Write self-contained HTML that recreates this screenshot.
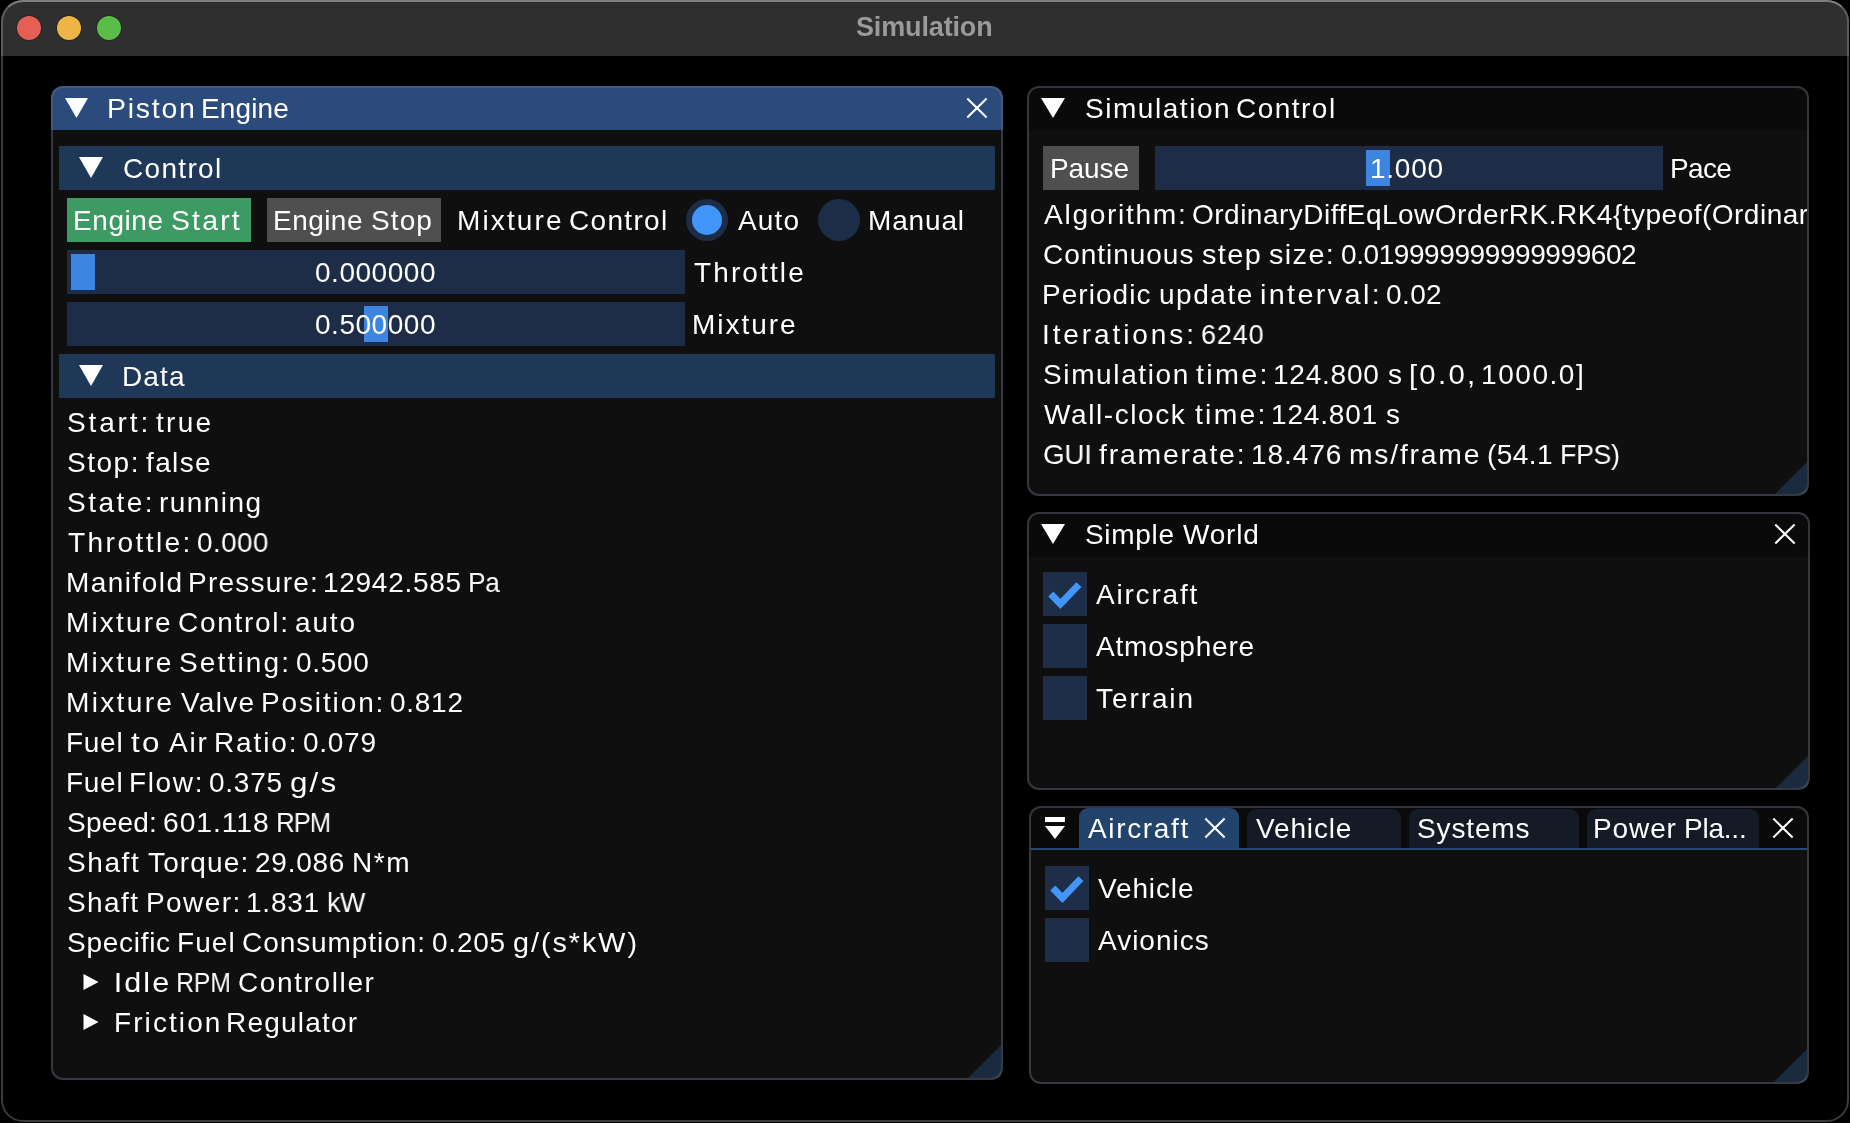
<!DOCTYPE html>
<html><head><meta charset="utf-8">
<style>
html,body{margin:0;padding:0;}
body{width:1850px;height:1123px;background:#000;position:relative;overflow:hidden;font-family:"Liberation Sans",sans-serif;}
.a{position:absolute;box-sizing:border-box;}
.t{position:absolute;white-space:pre;line-height:normal;font-family:"Liberation Sans",sans-serif;will-change:transform;}
.panel{position:absolute;box-sizing:border-box;border-radius:12px;background:#0f0f0f;overflow:hidden;}
.pbd{position:absolute;box-sizing:border-box;border:2px solid rgba(110,110,128,0.43);border-radius:12px;}
svg{position:absolute;left:0;top:0;}
</style></head><body>
<!-- mac window -->
<div class="a" style="left:1px;top:0;width:1848px;height:1122px;border:2px solid #3b3b3b;border-radius:22px;background:#000;"></div>
<div class="a" style="left:1px;top:0;width:1848px;height:56px;background:#2f2f2f;border-top:2px solid #7f7f7f;border-left:2px solid #5c5c5c;border-right:2px solid #5c5c5c;border-radius:22px 22px 0 0;"></div>
<div class="a" style="left:17px;top:16px;width:24px;height:24px;border-radius:50%;background:#e65f54;box-shadow:0 0 0 0.8px rgba(0,0,0,0.3);"></div>
<div class="a" style="left:57px;top:16px;width:24px;height:24px;border-radius:50%;background:#ecb545;box-shadow:0 0 0 0.8px rgba(0,0,0,0.3);"></div>
<div class="a" style="left:97px;top:16px;width:24px;height:24px;border-radius:50%;background:#5bbd49;box-shadow:0 0 0 0.8px rgba(0,0,0,0.3);"></div>

<!-- Piston Engine panel -->
<div class="panel" style="left:51px;top:86px;width:952px;height:994px;">
  <div class="a" style="left:0;top:0;width:952px;height:44px;background:#2a4b7c;"></div>
  <svg width="952" height="994"><path d="M917,992 L950,992 L950,959 Z" fill="#1a2a3f"/></svg>
</div>
<!-- Control header -->
<div class="a" style="left:59px;top:146px;width:936px;height:44px;background:#1f3858;"></div>
<div class="a" style="left:67px;top:198px;width:184px;height:44px;background:#3d9a63;"></div>
<div class="a" style="left:267px;top:198px;width:174px;height:44px;background:#4f4f4f;"></div>
<div class="a" style="left:686px;top:199px;width:42px;height:42px;border-radius:50%;background:#1e2d47;"></div>
<div class="a" style="left:692px;top:205px;width:30px;height:30px;border-radius:50%;background:#4296fa;"></div>
<div class="a" style="left:818px;top:199px;width:42px;height:42px;border-radius:50%;background:#1e2d47;"></div>
<div class="a" style="left:67px;top:250px;width:618px;height:44px;background:#1d2d47;"></div>
<div class="a" style="left:71px;top:254px;width:24px;height:36px;background:#3d85e0;"></div>
<div class="a" style="left:67px;top:302px;width:618px;height:44px;background:#1d2d47;"></div>
<div class="a" style="left:364px;top:306px;width:24px;height:36px;background:#3d85e0;"></div>
<div class="a" style="left:59px;top:354px;width:936px;height:44px;background:#1f3858;"></div>

<!-- Simulation Control panel -->
<div class="panel" style="left:1027px;top:86px;width:782px;height:410px;">
  <div class="a" style="left:0;top:0;width:782px;height:44px;background:#0a0a0a;"></div>
  <svg width="782" height="410"><path d="M748,408 L780,408 L780,376 Z" fill="#1a2a3f"/></svg>
</div>
<div class="a" style="left:1043px;top:146px;width:96px;height:44px;background:#4f4f4f;"></div>
<div class="a" style="left:1155px;top:146px;width:508px;height:44px;background:#1d2d47;"></div>
<div class="a" style="left:1366px;top:150px;width:24px;height:36px;background:#3d85e0;"></div>

<!-- Simple World panel -->
<div class="panel" style="left:1027px;top:512px;width:783px;height:278px;">
  <div class="a" style="left:0;top:0;width:783px;height:45px;background:#0a0a0a;"></div>
  <svg width="783" height="278"><path d="M749,276 L781,276 L781,244 Z" fill="#1a2a3f"/></svg>
</div>
<div class="a" style="left:1043px;top:572px;width:44px;height:44px;background:#1e2e48;"></div>
<div class="a" style="left:1043px;top:624px;width:44px;height:44px;background:#1e2e48;"></div>
<div class="a" style="left:1043px;top:676px;width:44px;height:44px;background:#1e2e48;"></div>

<!-- Tab panel -->
<div class="panel" style="left:1029px;top:806px;width:780px;height:278px;">
  <div class="a" style="left:0;top:0;width:780px;height:42px;background:#0a0a0a;"></div>
  <svg width="780" height="278"><path d="M745,276 L778,276 L778,243 Z" fill="#1a2a3f"/></svg>
</div>
<div class="a" style="left:1079px;top:808px;width:160px;height:40px;background:#22436c;border-radius:9px 9px 0 0;"></div>
<div class="a" style="left:1247px;top:809px;width:154px;height:39px;background:#141b27;border-radius:9px 9px 0 0;"></div>
<div class="a" style="left:1409px;top:809px;width:170px;height:39px;background:#141b27;border-radius:9px 9px 0 0;"></div>
<div class="a" style="left:1587px;top:809px;width:172px;height:39px;background:#141b27;border-radius:9px 9px 0 0;"></div>
<div class="a" style="left:1031px;top:848px;width:776px;height:2px;background:#264877;"></div>
<div class="a" style="left:1045px;top:866px;width:44px;height:44px;background:#1e2e48;"></div>
<div class="a" style="left:1045px;top:918px;width:44px;height:44px;background:#1e2e48;"></div>

<!-- vector overlay -->
<svg width="1850" height="1123" viewBox="0 0 1850 1123">
  <!-- collapse triangles -->
  <path d="M65,98 L88,98 L76.5,118 Z" fill="#fff"/>
  <path d="M79,157 L103,157 L91,178 Z" fill="#fff"/>
  <path d="M79,365 L103,365 L91,386 Z" fill="#fff"/>
  <path d="M1041,98 L1065,98 L1053,118 Z" fill="#fff"/>
  <path d="M1041,524 L1065,524 L1053,544 Z" fill="#fff"/>
  <path d="M83.5,974 L98.5,982 L83.5,990 Z" fill="#fff"/>
  <path d="M83.5,1014 L98.5,1022 L83.5,1030 Z" fill="#fff"/>
  <!-- tab menu -->
  <rect x="1045" y="817" width="20" height="5" fill="#fff"/>
  <path d="M1045,826 L1065,826 L1055,839 Z" fill="#fff"/>
  <!-- close X -->
  <g stroke="#fff" stroke-width="2.1" stroke-linecap="butt">
    <path d="M967.3,98.6 L986.6,117.4 M986.6,98.6 L967.3,117.4"/>
    <path d="M1775.3,524.6 L1794.6,543.4 M1794.6,524.6 L1775.3,543.4"/>
    <path d="M1205.3,818.6 L1224.6,837.4 M1224.6,818.6 L1205.3,837.4"/>
    <path d="M1773.3,818.6 L1792.6,837.4 M1792.6,818.6 L1773.3,837.4"/>
  </g>
  <!-- checkmarks -->
  <g stroke="#4296fa" stroke-width="7" fill="none" stroke-linejoin="miter" stroke-linecap="butt">
    <path d="M1050.8,594 L1060.4,603.9 L1078.9,584.6"/>
    <path d="M1052.8,888 L1062.4,897.9 L1080.9,878.6"/>
  </g>
</svg>
<div class="t" style="left:856.00px;top:12px;font-size:27px;letter-spacing:-0.146px;color:#9a9a9a;font-weight:bold;">Simulation</div>
<div class="t" style="left:107.30px;top:93px;font-size:28px;letter-spacing:1.741px;color:#ffffff;transform:scaleX(1.0163);transform-origin:2.00px 0;">Piston</div>
<div class="t" style="left:201.10px;top:93px;font-size:28px;letter-spacing:0.137px;color:#ffffff;">Engine</div>
<div class="t" style="left:123.00px;top:153px;font-size:28px;letter-spacing:1.326px;color:#ffffff;">Control</div>
<div class="t" style="left:73.30px;top:205px;font-size:28px;letter-spacing:0.577px;color:#ffffff;">Engine</div>
<div class="t" style="left:171.30px;top:205px;font-size:28px;letter-spacing:2.144px;color:#ffffff;transform:scaleX(1.0145);transform-origin:1.00px 0;">Start</div>
<div class="t" style="left:273.30px;top:205px;font-size:28px;letter-spacing:0.457px;color:#ffffff;">Engine</div>
<div class="t" style="left:370.70px;top:205px;font-size:28px;letter-spacing:1.091px;color:#ffffff;">Stop</div>
<div class="t" style="left:456.50px;top:205px;font-size:28px;letter-spacing:2.130px;color:#ffffff;">Mixture</div>
<div class="t" style="left:569.00px;top:205px;font-size:28px;letter-spacing:1.326px;color:#ffffff;">Control</div>
<div class="t" style="left:738.00px;top:205px;font-size:28px;letter-spacing:1.124px;color:#ffffff;">Auto</div>
<div class="t" style="left:867.60px;top:205px;font-size:28px;letter-spacing:0.837px;color:#ffffff;">Manual</div>
<div class="t" style="left:314.80px;top:257px;font-size:28px;letter-spacing:0.527px;color:#ffffff;">0.000000</div>
<div class="t" style="left:694.40px;top:257px;font-size:28px;letter-spacing:2.121px;color:#ffffff;">Throttle</div>
<div class="t" style="left:314.80px;top:309px;font-size:28px;letter-spacing:0.527px;color:#ffffff;">0.500000</div>
<div class="t" style="left:692.00px;top:309px;font-size:28px;letter-spacing:1.963px;color:#ffffff;">Mixture</div>
<div class="t" style="left:122.00px;top:361px;font-size:28px;letter-spacing:1.143px;color:#ffffff;">Data</div>
<div class="t" style="left:66.80px;top:407px;font-size:28px;letter-spacing:2.854px;color:#ffffff;">Start:</div>
<div class="t" style="left:155.70px;top:407px;font-size:28px;letter-spacing:2.275px;color:#ffffff;">true</div>
<div class="t" style="left:66.80px;top:447px;font-size:28px;letter-spacing:1.525px;color:#ffffff;">Stop:</div>
<div class="t" style="left:146.00px;top:447px;font-size:28px;letter-spacing:1.357px;color:#ffffff;">false</div>
<div class="t" style="left:66.80px;top:487px;font-size:28px;letter-spacing:2.464px;color:#ffffff;">State:</div>
<div class="t" style="left:159.00px;top:487px;font-size:28px;letter-spacing:1.444px;color:#ffffff;">running</div>
<div class="t" style="left:67.80px;top:527px;font-size:28px;letter-spacing:2.416px;color:#ffffff;transform:scaleX(1.0029);transform-origin:0.00px 0;">Throttle:</div>
<div class="t" style="left:196.90px;top:527px;font-size:28px;letter-spacing:0.416px;color:#ffffff;transform:scaleX(0.9935);transform-origin:1.00px 0;">0.000</div>
<div class="t" style="left:65.80px;top:567px;font-size:28px;letter-spacing:1.448px;color:#ffffff;">Manifold</div>
<div class="t" style="left:187.70px;top:567px;font-size:28px;letter-spacing:1.257px;color:#ffffff;">Pressure:</div>
<div class="t" style="left:323.30px;top:567px;font-size:28px;letter-spacing:0.714px;color:#ffffff;">12942.585</div>
<div class="t" style="left:468.30px;top:567px;font-size:28px;letter-spacing:-0.378px;color:#ffffff;transform:scaleX(0.9350);transform-origin:2.00px 0;">Pa</div>
<div class="t" style="left:65.80px;top:607px;font-size:28px;letter-spacing:2.147px;color:#ffffff;">Mixture</div>
<div class="t" style="left:178.40px;top:607px;font-size:28px;letter-spacing:1.705px;color:#ffffff;">Control:</div>
<div class="t" style="left:295.10px;top:607px;font-size:28px;letter-spacing:1.825px;color:#ffffff;">auto</div>
<div class="t" style="left:65.80px;top:647px;font-size:28px;letter-spacing:2.247px;color:#ffffff;">Mixture</div>
<div class="t" style="left:179.00px;top:647px;font-size:28px;letter-spacing:2.161px;color:#ffffff;">Setting:</div>
<div class="t" style="left:295.80px;top:647px;font-size:28px;letter-spacing:0.701px;color:#ffffff;">0.500</div>
<div class="t" style="left:65.80px;top:687px;font-size:28px;letter-spacing:2.301px;color:#ffffff;transform:scaleX(1.0036);transform-origin:2.00px 0;">Mixture</div>
<div class="t" style="left:180.70px;top:687px;font-size:28px;letter-spacing:1.277px;color:#ffffff;">Valve</div>
<div class="t" style="left:260.70px;top:687px;font-size:28px;letter-spacing:1.873px;color:#ffffff;">Position:</div>
<div class="t" style="left:389.80px;top:687px;font-size:28px;letter-spacing:0.726px;color:#ffffff;">0.812</div>
<div class="t" style="left:65.80px;top:727px;font-size:28px;letter-spacing:0.717px;color:#ffffff;">Fuel</div>
<div class="t" style="left:130.70px;top:727px;font-size:28px;letter-spacing:2.030px;color:#ffffff;transform:scaleX(1.1200);transform-origin:0.00px 0;">to</div>
<div class="t" style="left:168.70px;top:727px;font-size:28px;letter-spacing:1.802px;color:#ffffff;">Air</div>
<div class="t" style="left:213.70px;top:727px;font-size:28px;letter-spacing:1.867px;color:#ffffff;">Ratio:</div>
<div class="t" style="left:302.90px;top:727px;font-size:28px;letter-spacing:0.726px;color:#ffffff;">0.079</div>
<div class="t" style="left:65.80px;top:767px;font-size:28px;letter-spacing:0.717px;color:#ffffff;">Fuel</div>
<div class="t" style="left:128.70px;top:767px;font-size:28px;letter-spacing:1.646px;color:#ffffff;">Flow:</div>
<div class="t" style="left:208.90px;top:767px;font-size:28px;letter-spacing:0.751px;color:#ffffff;">0.375</div>
<div class="t" style="left:289.90px;top:767px;font-size:28px;letter-spacing:2.025px;color:#ffffff;transform:scaleX(1.1200);transform-origin:1.00px 0;">g/s</div>
<div class="t" style="left:66.80px;top:807px;font-size:28px;letter-spacing:0.227px;color:#ffffff;">Speed:</div>
<div class="t" style="left:163.40px;top:807px;font-size:28px;letter-spacing:0.927px;color:#ffffff;transform:scaleX(1.0094);transform-origin:1.00px 0;">601.118</div>
<div class="t" style="left:276.00px;top:807px;font-size:28px;letter-spacing:-1.073px;color:#ffffff;transform:scaleX(0.9145);transform-origin:2.00px 0;">RPM</div>
<div class="t" style="left:66.80px;top:847px;font-size:28px;letter-spacing:1.575px;color:#ffffff;">Shaft</div>
<div class="t" style="left:148.20px;top:847px;font-size:28px;letter-spacing:1.148px;color:#ffffff;">Torque:</div>
<div class="t" style="left:255.20px;top:847px;font-size:28px;letter-spacing:0.746px;color:#ffffff;">29.086</div>
<div class="t" style="left:351.50px;top:847px;font-size:28px;letter-spacing:1.541px;color:#ffffff;">N*m</div>
<div class="t" style="left:66.80px;top:887px;font-size:28px;letter-spacing:1.425px;color:#ffffff;">Shaft</div>
<div class="t" style="left:145.60px;top:887px;font-size:28px;letter-spacing:1.407px;color:#ffffff;">Power:</div>
<div class="t" style="left:245.50px;top:887px;font-size:28px;letter-spacing:0.776px;color:#ffffff;">1.831</div>
<div class="t" style="left:326.60px;top:887px;font-size:28px;letter-spacing:-0.406px;color:#ffffff;transform:scaleX(0.9598);transform-origin:1.00px 0;">kW</div>
<div class="t" style="left:66.80px;top:927px;font-size:28px;letter-spacing:0.723px;color:#ffffff;">Specific</div>
<div class="t" style="left:177.40px;top:927px;font-size:28px;letter-spacing:1.051px;color:#ffffff;">Fuel</div>
<div class="t" style="left:242.30px;top:927px;font-size:28px;letter-spacing:0.929px;color:#ffffff;">Consumption:</div>
<div class="t" style="left:432.00px;top:927px;font-size:28px;letter-spacing:0.776px;color:#ffffff;">0.205</div>
<div class="t" style="left:513.10px;top:927px;font-size:28px;letter-spacing:1.911px;color:#ffffff;transform:scaleX(1.0272);transform-origin:1.00px 0;">g/(s*kW)</div>
<div class="t" style="left:114.40px;top:967px;font-size:28px;letter-spacing:1.868px;color:#ffffff;transform:scaleX(1.0898);transform-origin:2.00px 0;">Idle</div>
<div class="t" style="left:176.40px;top:967px;font-size:28px;letter-spacing:-0.132px;color:#ffffff;transform:scaleX(0.8800);transform-origin:2.00px 0;">RPM</div>
<div class="t" style="left:238.40px;top:967px;font-size:28px;letter-spacing:1.616px;color:#ffffff;">Controller</div>
<div class="t" style="left:113.70px;top:1007px;font-size:28px;letter-spacing:2.083px;color:#ffffff;">Friction</div>
<div class="t" style="left:226.00px;top:1007px;font-size:28px;letter-spacing:1.215px;color:#ffffff;">Regulator</div>
<div class="t" style="left:1084.80px;top:93px;font-size:28px;letter-spacing:1.538px;color:#ffffff;">Simulation</div>
<div class="t" style="left:1236.30px;top:93px;font-size:28px;letter-spacing:1.476px;color:#ffffff;">Control</div>
<div class="t" style="left:1049.60px;top:153px;font-size:28px;letter-spacing:-0.105px;color:#ffffff;">Pause</div>
<div class="t" style="left:1370.00px;top:153px;font-size:28px;letter-spacing:0.751px;color:#ffffff;">1.000</div>
<div class="t" style="left:1669.60px;top:153px;font-size:28px;letter-spacing:-0.683px;color:#ffffff;">Pace</div>
<div class="a" style="left:1029px;top:130px;width:778px;height:364px;overflow:hidden;"><div style="position:absolute;left:-1029px;top:-130px;width:1850px;height:600px;"><div class="t" style="left:1043.80px;top:199px;font-size:28px;letter-spacing:1.669px;color:#ffffff;transform:scaleX(1.0052);transform-origin:0.00px 0;">Algorithm:</div></div></div>
<div class="a" style="left:1029px;top:130px;width:778px;height:364px;overflow:hidden;"><div style="position:absolute;left:-1029px;top:-130px;width:1850px;height:600px;"><div class="t" style="left:1192.30px;top:199px;font-size:28px;letter-spacing:0.490px;color:#ffffff;">OrdinaryDiffEqLowOrderRK.RK4{typeof(OrdinaryDiffEq.trivial_limiter!)</div></div></div>
<div class="t" style="left:1042.60px;top:239px;font-size:28px;letter-spacing:0.972px;color:#ffffff;">Continuous</div>
<div class="t" style="left:1201.50px;top:239px;font-size:28px;letter-spacing:1.354px;color:#ffffff;transform:scaleX(1.0299);transform-origin:0.00px 0;">step</div>
<div class="t" style="left:1269.10px;top:239px;font-size:28px;letter-spacing:1.354px;color:#ffffff;transform:scaleX(1.0292);transform-origin:0.00px 0;">size:</div>
<div class="t" style="left:1340.60px;top:239px;font-size:28px;letter-spacing:-0.420px;color:#ffffff;">0.019999999999999602</div>
<div class="t" style="left:1041.60px;top:279px;font-size:28px;letter-spacing:1.049px;color:#ffffff;">Periodic</div>
<div class="t" style="left:1158.60px;top:279px;font-size:28px;letter-spacing:1.526px;color:#ffffff;">update</div>
<div class="t" style="left:1259.80px;top:279px;font-size:28px;letter-spacing:2.293px;color:#ffffff;transform:scaleX(1.0281);transform-origin:1.00px 0;">interval:</div>
<div class="t" style="left:1386.10px;top:279px;font-size:28px;letter-spacing:0.392px;color:#ffffff;">0.02</div>
<div class="t" style="left:1041.60px;top:319px;font-size:28px;letter-spacing:2.897px;color:#ffffff;">Iterations:</div>
<div class="t" style="left:1200.50px;top:319px;font-size:28px;letter-spacing:0.897px;color:#ffffff;transform:scaleX(0.9620);transform-origin:1.00px 0;">6240</div>
<div class="t" style="left:1042.60px;top:359px;font-size:28px;letter-spacing:1.627px;color:#ffffff;">Simulation</div>
<div class="t" style="left:1195.90px;top:359px;font-size:28px;letter-spacing:2.217px;color:#ffffff;transform:scaleX(1.0271);transform-origin:0.00px 0;">time:</div>
<div class="t" style="left:1273.00px;top:359px;font-size:28px;letter-spacing:0.777px;color:#ffffff;">124.800</div>
<div class="t" style="left:1387.80px;top:359px;font-size:28px;letter-spacing:1.217px;color:#ffffff;">s</div>
<div class="t" style="left:1408.90px;top:359px;font-size:28px;letter-spacing:2.217px;color:#ffffff;transform:scaleX(1.0458);transform-origin:2.00px 0;">[0.0,</div>
<div class="t" style="left:1480.70px;top:359px;font-size:28px;letter-spacing:1.560px;color:#ffffff;">1000.0]</div>
<div class="t" style="left:1043.60px;top:399px;font-size:28px;letter-spacing:1.587px;color:#ffffff;">Wall-clock</div>
<div class="t" style="left:1194.90px;top:399px;font-size:28px;letter-spacing:2.214px;color:#ffffff;transform:scaleX(1.0125);transform-origin:0.00px 0;">time:</div>
<div class="t" style="left:1271.00px;top:399px;font-size:28px;letter-spacing:0.827px;color:#ffffff;">124.801</div>
<div class="t" style="left:1386.10px;top:399px;font-size:28px;letter-spacing:1.214px;color:#ffffff;">s</div>
<div class="t" style="left:1042.60px;top:439px;font-size:28px;letter-spacing:-0.222px;color:#ffffff;transform:scaleX(0.9923);transform-origin:1.00px 0;">GUI</div>
<div class="t" style="left:1099.30px;top:439px;font-size:28px;letter-spacing:1.778px;color:#ffffff;transform:scaleX(1.0139);transform-origin:0.00px 0;">framerate:</div>
<div class="t" style="left:1250.60px;top:439px;font-size:28px;letter-spacing:0.946px;color:#ffffff;">18.476</div>
<div class="t" style="left:1348.90px;top:439px;font-size:28px;letter-spacing:1.778px;color:#ffffff;transform:scaleX(1.0106);transform-origin:1.00px 0;">ms/frame</div>
<div class="t" style="left:1487.30px;top:439px;font-size:28px;letter-spacing:0.463px;color:#ffffff;">(54.1</div>
<div class="t" style="left:1559.90px;top:439px;font-size:28px;letter-spacing:-0.222px;color:#ffffff;transform:scaleX(0.9483);transform-origin:2.00px 0;">FPS)</div>
<div class="t" style="left:1085.20px;top:519px;font-size:28px;letter-spacing:0.697px;color:#ffffff;">Simple</div>
<div class="t" style="left:1183.20px;top:519px;font-size:28px;letter-spacing:0.815px;color:#ffffff;">World</div>
<div class="t" style="left:1095.50px;top:579px;font-size:28px;letter-spacing:1.801px;color:#ffffff;">Aircraft</div>
<div class="t" style="left:1095.50px;top:631px;font-size:28px;letter-spacing:0.790px;color:#ffffff;">Atmosphere</div>
<div class="t" style="left:1095.50px;top:683px;font-size:28px;letter-spacing:1.914px;color:#ffffff;">Terrain</div>
<div class="t" style="left:1088.30px;top:813px;font-size:28px;letter-spacing:1.658px;color:#ffffff;">Aircraft</div>
<div class="t" style="left:1256.00px;top:813px;font-size:28px;letter-spacing:0.847px;color:#ffffff;">Vehicle</div>
<div class="t" style="left:1417.00px;top:813px;font-size:28px;letter-spacing:0.858px;color:#ffffff;">Systems</div>
<div class="t" style="left:1593.40px;top:813px;font-size:28px;letter-spacing:0.890px;color:#ffffff;">Power</div>
<div class="t" style="left:1683.50px;top:813px;font-size:28px;letter-spacing:-0.225px;color:#ffffff;">Pla...</div>
<div class="t" style="left:1097.60px;top:873px;font-size:28px;letter-spacing:0.864px;color:#ffffff;">Vehicle</div>
<div class="t" style="left:1097.60px;top:925px;font-size:28px;letter-spacing:0.992px;color:#ffffff;">Avionics</div>
<div class="pbd" style="left:51px;top:86px;width:952px;height:994px;"></div>
<div class="pbd" style="left:1027px;top:86px;width:782px;height:410px;"></div>
<div class="pbd" style="left:1027px;top:512px;width:783px;height:278px;"></div>
<div class="pbd" style="left:1029px;top:806px;width:780px;height:278px;"></div>
</body></html>
